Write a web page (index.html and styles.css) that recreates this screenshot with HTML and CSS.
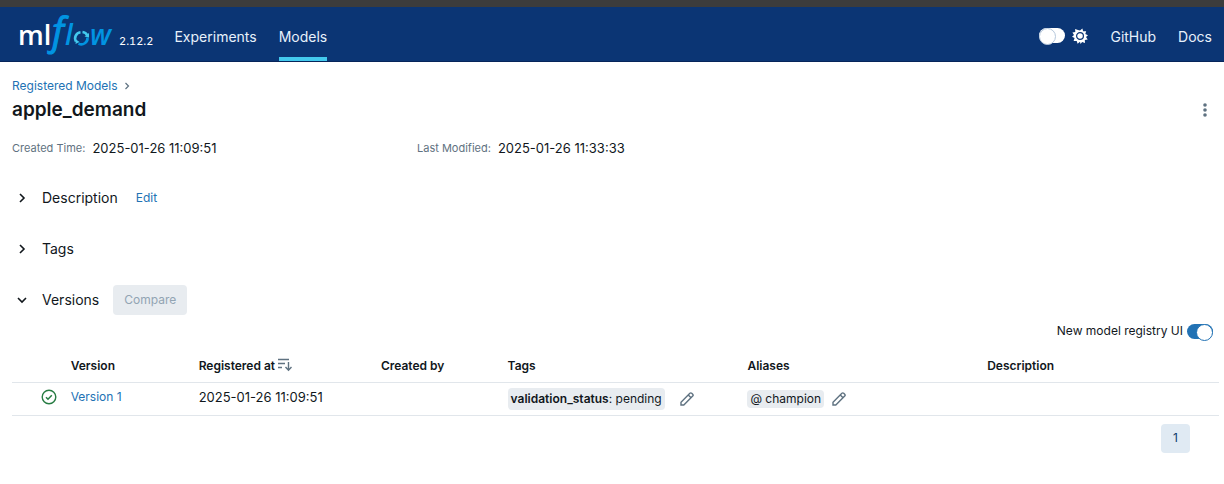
FILE: index.html
```html
<!DOCTYPE html>
<html lang="en">
<head>
<meta charset="utf-8">
<title>apple_demand - MLflow</title>
<link rel="stylesheet" href="styles.css">
</head>
<body>
<header class="topbar">
  <a class="logo" href="#" aria-label="mlflow">
    <svg width="98" height="48" viewBox="0 0 98 48" aria-hidden="true">
      <text class="logo-ml" x="0" y="36">ml</text>
      <text class="logo-f" x="34" y="36">f</text>
      <text class="logo-low" x="47" y="36">l</text>
      <g fill="none" stroke-width="2.600">
        <path d="M58 32.500A6.200 6.200 0 0 1 62.500 23.200" stroke="#43c9ed"/>
        <path d="M64.500 23A6.200 6.200 0 0 1 69.300 26.500" stroke="#43c9ed"/>
        <path d="M69.500 28.500A6.200 6.200 0 0 1 60.500 34.600" stroke="#0194e2"/>
      </g>
      <path d="M66.500 27.500l4.500-3.500v4.500z" fill="#43c9ed"/>
      <path d="M57.500 35l.5-4.500 3.500 2.500z" fill="#43c9ed"/>
      <text class="logo-low" x="72" y="36">w</text>
    </svg>
  </a>
  <span class="release">2.12.2</span>
  <nav class="nav">
    <a href="#">Experiments</a>
    <a href="#" class="active" aria-current="page">Models</a>
  </nav>
  <div class="nav nav-right">
    <label class="theme"><input type="checkbox" class="switch" role="switch" aria-label="Dark theme">
      <svg width="16" height="16" viewBox="0 0 16 16" aria-hidden="true">
        <path fill="#fff" d="M8 2.500L10.400.4l.7 2.900 3.100-.1-.9 2.900L16 7.200 14 9l1.700 2.400-2.900.7.200 3-2.900-1L8.500 16 8 13.700 5.600 15.800l-.9-2.900-3.100.2 1-3L0 8.700 2 7 .4 4.600l2.900-.6L3.100.9 6 2z"/>
        <circle cx="8" cy="8" r="3.400" fill="none" stroke="#0b3574" stroke-width="1.200"/>
      </svg>
    </label>
    <a href="#">GitHub</a>
    <a href="#">Docs</a>
  </div>
</header>
<main class="page">
  <nav class="crumbs" aria-label="Breadcrumb">
    <a href="#">Registered Models</a>
    <svg width="6" height="8" viewBox="0 0 6 8" aria-hidden="true"><path d="M1.500 1L4.500 4l-3 3" fill="none" stroke="#5f7281" stroke-width="1.200"/></svg>
  </nav>
  <div class="title-row">
    <h1>apple_demand</h1>
    <button class="icon-btn more" aria-label="More actions"><svg width="4" height="14" viewBox="0 0 4 14"><g fill="#5f7281"><circle cx="2" cy="2" r="1.800"/><circle cx="2" cy="7" r="1.800"/><circle cx="2" cy="12" r="1.800"/></g></svg></button>
  </div>
  <dl class="meta">
    <div><dt>Created Time:</dt><dd>2025-01-26 11:09:51</dd></div>
    <div><dt>Last Modified:</dt><dd>2025-01-26 11:33:33</dd></div>
  </dl>
  <section class="section">
    <button class="section-toggle" aria-expanded="false"><svg width="10" height="10" viewBox="0 0 10 10"><path d="M3 1l4 4-4 4" fill="none" stroke="#11171c" stroke-width="1.600"/></svg>Description</button>
    <a class="edit" href="#">Edit</a>
  </section>
  <section class="section">
    <button class="section-toggle" aria-expanded="false"><svg width="10" height="10" viewBox="0 0 10 10"><path d="M3 1l4 4-4 4" fill="none" stroke="#11171c" stroke-width="1.600"/></svg>Tags</button>
  </section>
  <section class="section">
    <button class="section-toggle" aria-expanded="true"><svg width="10" height="10" viewBox="0 0 10 10"><path d="M1 3l4 4 4-4" fill="none" stroke="#11171c" stroke-width="1.600"/></svg>Versions</button>
    <button class="compare" disabled>Compare</button>
  </section>
  <label class="registry-ui">New model registry UI <input type="checkbox" class="switch" role="switch" checked></label>
  <table class="versions">
    <colgroup><col class="c-status"><col class="c-version"><col class="c-date"><col class="c-user"><col><col><col></colgroup>
    <thead>
      <tr>
        <th aria-label="Status"></th><th>Version</th>
        <th>Registered at <svg class="sort" width="14" height="14" viewBox="0 0 14 14" aria-hidden="true"><path d="M0 1.500h11M0 5.500h7M0 9.500h4M10.500 4v8M7.500 9l3 3.200 3-3.200" fill="none" stroke="#5f7281" stroke-width="1.400"/></svg></th>
        <th>Created by</th><th>Tags</th><th>Aliases</th><th>Description</th>
      </tr>
    </thead>
    <tbody>
      <tr>
        <td class="status"><svg width="16" height="16" viewBox="0 0 16 16" role="img" aria-label="Ready"><circle cx="8" cy="8" r="6.800" fill="none" stroke="#277c43" stroke-width="1.400"/><path d="M5 8.200l2 2 3.800-4" fill="none" stroke="#277c43" stroke-width="1.500"/></svg></td>
        <td class="plain"><a href="#">Version 1</a></td>
        <td class="plain date">2025-01-26 11:09:51</td>
        <td></td>
        <td><div class="chips"><span class="chip tag"><b>validation_status</b>: pending</span><button class="icon-btn" aria-label="Edit tags"><svg width="14" height="14" viewBox="0 0 14 14"><path d="M1 13v-2.800L9.900 1.300a1.300 1.300 0 0 1 1.800 0l1 1a1.300 1.300 0 0 1 0 1.800L3.800 13zM8.300 3l2.700 2.700" fill="none" stroke="#5f7281" stroke-width="1.400"/></svg></button></div></td>
        <td><div class="chips aliases"><span class="chip">@ champion</span><button class="icon-btn" aria-label="Edit aliases"><svg width="14" height="14" viewBox="0 0 14 14"><path d="M1 13v-2.800L9.900 1.300a1.300 1.300 0 0 1 1.800 0l1 1a1.300 1.300 0 0 1 0 1.800L3.800 13zM8.300 3l2.700 2.700" fill="none" stroke="#5f7281" stroke-width="1.400"/></svg></button></div></td>
        <td></td>
      </tr>
    </tbody>
  </table>
  <nav class="pager" aria-label="Pages"><button aria-current="page">1</button></nav>
</main>
</body>
</html>
```
FILE: styles.css
```css
* { box-sizing: border-box; }
body {
  margin: 0;
  background: #fff;
  color: #11171c;
  font: 12px/16px Inter, "Liberation Sans", sans-serif;
}
a { color: #2272b4; text-decoration: none; }
button { font: inherit; color: inherit; border: 0; background: none; padding: 0; }
svg { display: block; flex: none; }

.topbar {
  display: flex;
  height: 62px;
  padding: 0 12px 0 18px;
  background: #0b3574;
  border-top: 7px solid #3c3c3c;
  border-bottom: 1px solid #06255a;
}
.logo { padding-top: 2px; }
.logo svg { overflow: visible; }
.logo-ml { font: 600 27px "Open Sans", sans-serif; fill: #fff; }
.logo-f { font: italic 38px "Open Sans", sans-serif; fill: #0194e2; stroke: #0194e2; }
.logo-low { font: italic 600 28px "Open Sans", sans-serif; fill: #0194e2; }
.release { color: #fff; font-size: 11px; font-variant-numeric: tabular-nums; padding: 26px 0 0 3px; }
.nav { display: flex; gap: 22px; margin-left: 21px; font-size: 14px; }
.nav a { display: flex; align-items: center; padding-top: 9px; color: #e7f1fb; border-bottom: 4px solid transparent; }
.nav .active { border-color: #43c9ed; }
.nav-right { margin-left: auto; }
.theme { display: flex; align-items: center; gap: 7px; padding-top: 3px; }

.switch {
  appearance: none;
  width: 26px;
  height: 15px;
  margin: 0;
  border-radius: 8px;
  background: #fff;
  display: flex;
}
.switch::before {
  content: "";
  width: 15px;
  height: 15px;
  border: 1px solid #b6c8dc;
  border-radius: 50%;
  background: #fff;
}
.switch:checked { background: #2272b4; justify-content: flex-end; }
.switch:checked::before { border-color: #2272b4; }

.page { padding: 16px 5px 16px 12px; }
.crumbs { display: flex; align-items: center; gap: 6px; }
.title-row { display: flex; align-items: center; justify-content: space-between; padding-right: 12px; }
h1 { margin: 0; font-size: 19px; line-height: 32px; font-weight: 600; }
.meta { display: grid; grid-template-columns: 1fr 2fr; margin: 14px 0 0; padding-right: 8px; column-gap: 8px; }
.meta div { display: flex; gap: 7px; }
.meta dt { color: #5f7281; font-size: 11px; }
.meta dd { margin: 0; }
.meta dd, .date { font-size: 13px; }
.section { display: flex; align-items: center; height: 30px; margin-top: 21px; }
.meta + .section { margin-top: 27px; }
.section-toggle { display: flex; align-items: center; gap: 15px; padding-left: 5px; font-size: 14px; }
.edit { margin-left: 18px; }
.compare { margin-left: 14px; height: 30px; padding: 0 11px; border-radius: 4px; background: #e8ecf0; color: #92a4b3; }
.registry-ui { display: flex; align-items: center; justify-content: flex-end; gap: 4px; margin: 8px 6px 11px 0; }

.versions { width: 100%; table-layout: fixed; border-collapse: collapse; }
.c-status { width: 4.200%; }
.c-version { width: 10.600%; }
.c-date { width: 15.100%; }
.c-user { width: 10.500%; }
th, td { padding: 0 8px; text-align: left; border-bottom: 1px solid #e1e6eb; white-space: nowrap; }
th { height: 32px; font-weight: 600; }
td { height: 33px; }
.sort { display: inline-block; vertical-align: -2px; }
.plain, .status { padding-bottom: 3px; }
.status { padding-right: 6px; }
.status svg { margin-left: auto; }
.chips { display: flex; align-items: center; gap: 15px; }
.chips.aliases { gap: 8px; }
.chip { padding: 1px 3px; border-radius: 4px; background: #e8ecf0; }
.chip.tag { padding: 3px; }
.chip b { font-weight: 600; }
.pager { display: flex; justify-content: flex-end; margin: 8px 29px 0 0; }
.pager button { width: 29px; height: 29px; border-radius: 4px; background: #e0eaf3; color: #0e3a6b; }
```
